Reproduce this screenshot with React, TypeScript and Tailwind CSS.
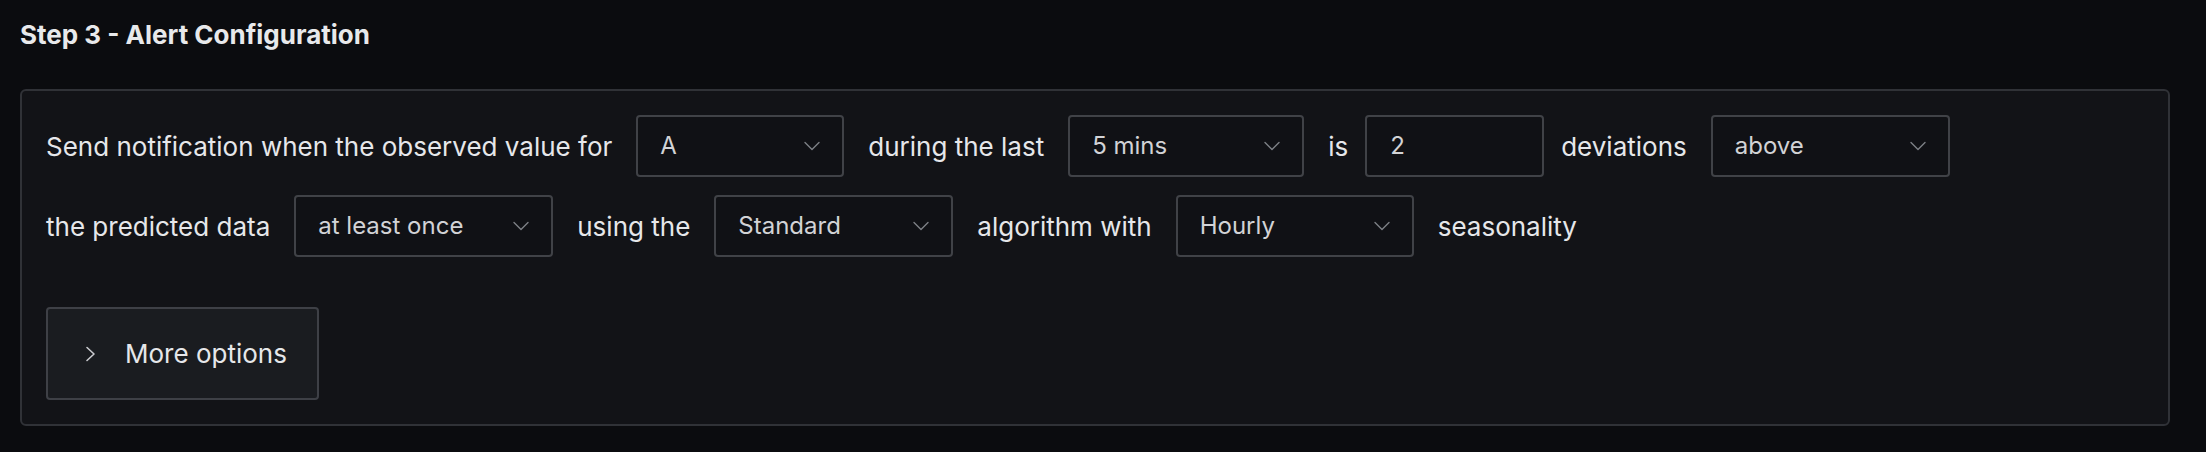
import React from 'react';

const Chevron: React.FC = () => (
    <svg width="16" height="10" viewBox="0 0 16 10" fill="none" className="shrink-0">
        <polyline points="1,1.5 8,8.5 15,1.5" stroke="#7d8086" strokeWidth="1.4" strokeLinecap="round" strokeLinejoin="round" />
    </svg>
);

const Select: React.FC<{ value: string; width: string }> = ({ value, width }) => (
    <div className={`flex h-[62px] shrink-0 items-center justify-between rounded-[4px] border-2 border-[#404247] bg-[#101115] pl-[22px] pr-[22px] ${width}`}>
        <span className="text-[24px] text-[#d2d3d6]">{value}</span>
        <Chevron />
    </div>
);

const Label: React.FC<{ children: React.ReactNode }> = ({ children }) => (
    <span className="shrink-0 text-[26px] text-[#e6e7ea]">{children}</span>
);

const App: React.FC = () => {
    return (
        <div className="min-h-screen w-full bg-[#0b0c0f] pl-5 pr-[36px] pt-[18px]" style={{ fontFamily: 'Inter, "Noto Sans", sans-serif' }}>
            <h2 className="text-[26px] font-bold leading-[34px] text-[#e8e9eb]">Step 3 - Alert Configuration</h2>
            <div className="mt-[37px] rounded-[6px] border-2 border-[#303237] bg-[#121317] px-[24px] pt-[24px] pb-[24px]">
                <div className="flex items-center gap-6">
                    <Label>Send notification when the observed value for</Label>
                    <Select value="A" width="w-[208px]" />
                    <Label>during the last</Label>
                    <Select value="5 mins" width="w-[236px]" />
                    <Label>is</Label>
                    <div className="-mx-[7px] flex h-[62px] w-[179px] shrink-0 items-center rounded-[4px] border-2 border-[#404247] bg-[#101115] pl-[23px]">
                        <span className="text-[24px] text-[#d2d3d6]">2</span>
                    </div>
                    <Label>deviations</Label>
                    <Select value="above" width="w-[239px]" />
                </div>
                <div className="mt-[18px] flex items-center gap-6">
                    <Label>the predicted data</Label>
                    <Select value="at least once" width="w-[259px]" />
                    <Label>using the</Label>
                    <Select value="Standard" width="w-[239px]" />
                    <Label>algorithm with</Label>
                    <Select value="Hourly" width="w-[238px]" />
                    <Label>seasonality</Label>
                </div>
                <button className="mt-[50px] flex h-[93px] w-[273px] items-center rounded-[4px] border-2 border-[#3e4046] bg-[#1a1c20] pl-[37px]">
                    <svg width="12" height="16" viewBox="0 0 12 16" fill="none" className="shrink-0">
                        <polyline points="2,1.5 9,8 2,14.5" stroke="#c9cace" strokeWidth="1.6" strokeLinecap="round" strokeLinejoin="round" />
                    </svg>
                    <span className="ml-[28px] text-[26px] text-[#e6e7ea]">More options</span>
                </button>
            </div>
        </div>
    );
};

export default App;
